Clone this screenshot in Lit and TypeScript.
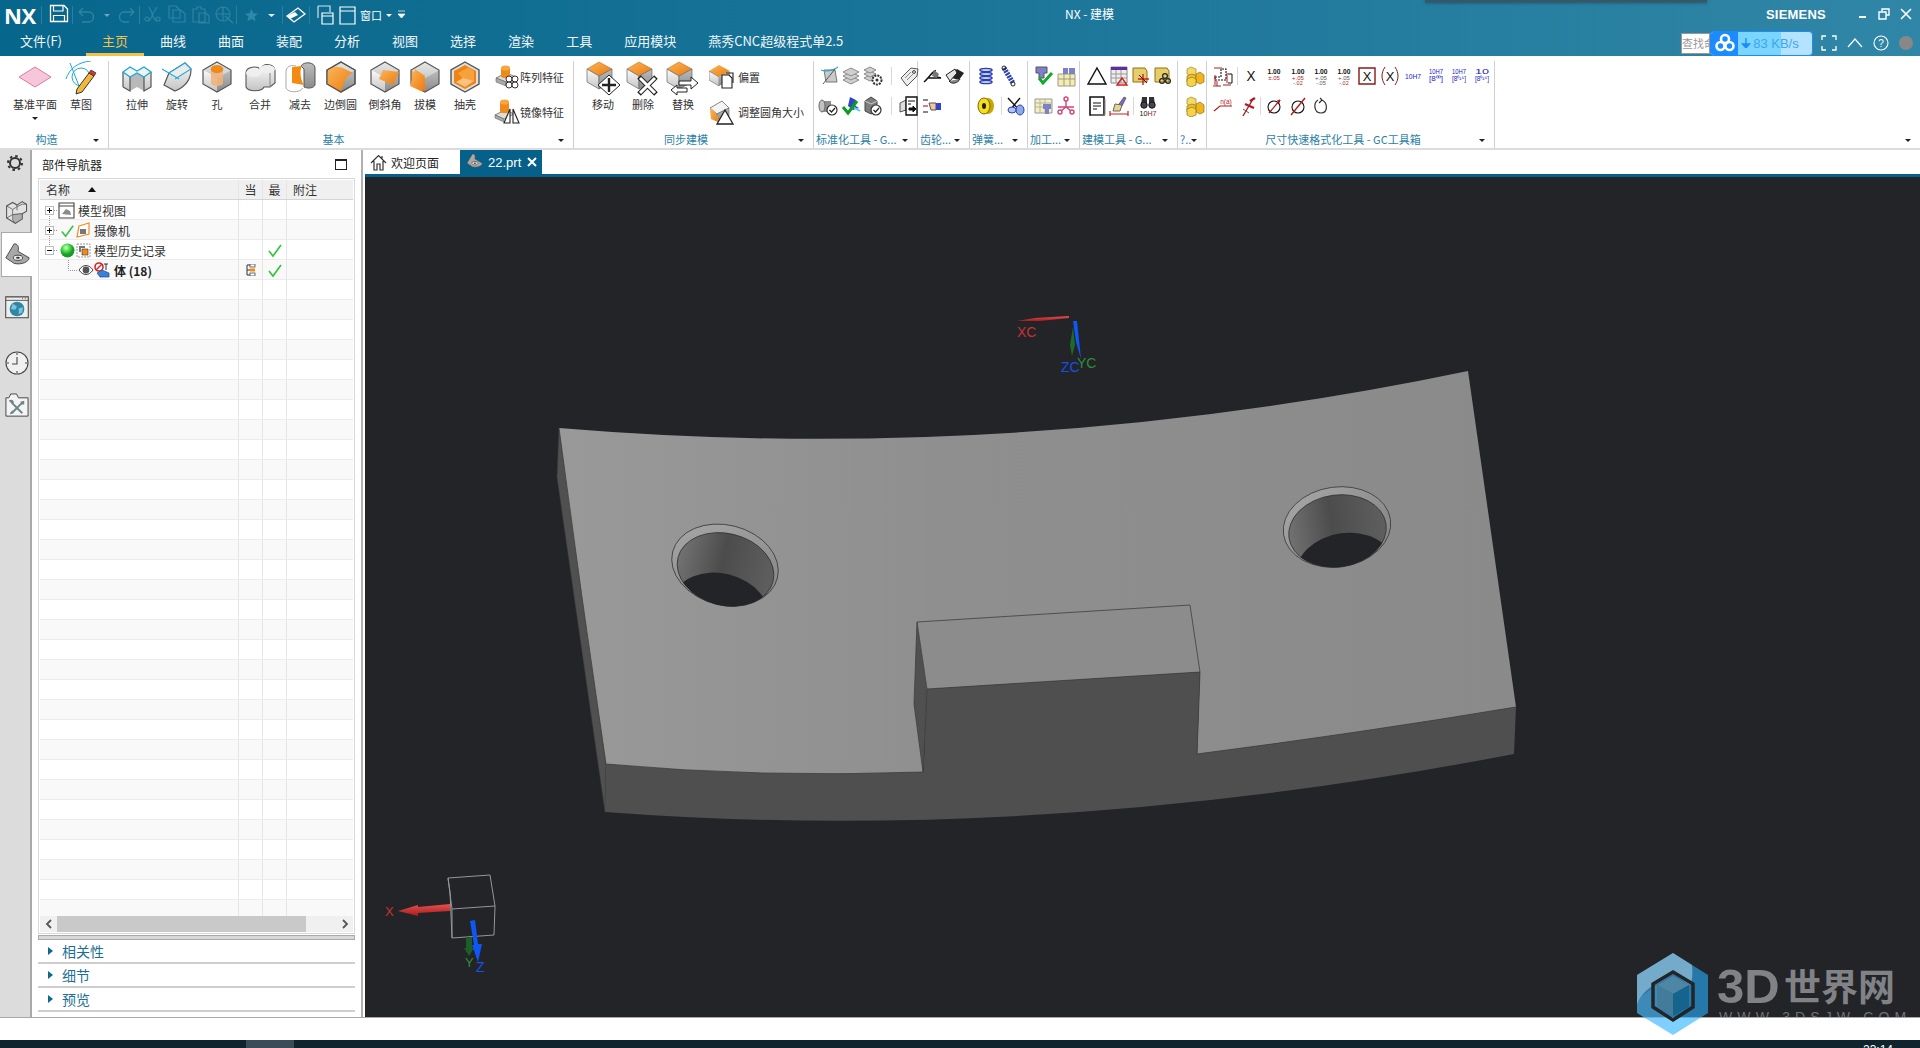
import { LitElement, css, html, svg, TemplateResult } from "lit";
import { customElement } from "lit/decorators.js";

const box = (size: number, c: unknown, w = size, h = w) =>
  html`<svg width=${size} height=${(size * h) / w} viewBox="0 0 ${w} ${h}">${c}</svg>`;

// base cube used by most of the ribbon icons
const cube = (t = "url(#gt)", l = "url(#gl)", r = "url(#gr)") => svg`
  <path d="M16 1 30 9 16 17 2 9Z" fill=${t} />
  <path d="M2 9 16 17V31L2 23Z" fill=${l} />
  <path d="M30 9 16 17V31L30 23Z" fill=${r} />
  <path d="M16 1 30 9V23L16 31 2 23V9Z" fill="none" stroke="#555" stroke-width="1.2" />`;

const orangeCube = svg`
  <path d="M13 1 26 8 13 15 1 8Z" fill="url(#go)" stroke="#c96a10" stroke-width=".6" />
  <path d="M1 8 13 15V28L1 21Z" fill="url(#gl)" stroke="#666" stroke-width=".7" />
  <path d="M26 8 13 15V28L26 21Z" fill="url(#gr)" stroke="#666" stroke-width=".7" />`;

const big: Record<string, unknown> = {
  plane: svg`<path d="M0 16 16 6 32 16 16 26Z" fill="#f6c6da" stroke="#e0789c" stroke-width="1" />`,
  sketch: svg`
    <path d="M1 18C4 8 13 1 26 0M5 2 16 30" fill="none" stroke="#1fa8d8" stroke-width="1" />
    <circle cx="16" cy="16" r="9" fill="none" stroke="#1fa8d8" stroke-width="1" />
    <path d="M12 28 24 12 29 15 17 31 11 33Z" fill="#f5b93a" stroke="#333" stroke-width="1" />
    <path d="M24 12 26 9 31 12 29 15Z" fill="#d33" stroke="#333" stroke-width=".8" />`,
  extrude: svg`
    <path d="M2 11 9 6 16 10 23 6 30 11V26L23 30V16L16 12 9 16V30L2 26Z" fill="url(#gl)" />
    <path d="M9 16 16 12 23 16V30L16 26 9 30Z" fill="#b9b9b9" />
    <path d="M2 26V11M30 11V26L23 30V16M9 16V30L2 26" fill="none" stroke="#555" stroke-width="1.2" />
    <path d="M2 11 9 6 16 10 23 6 30 11 23 16 16 12 9 16Z" fill="#f2f2f2" stroke="#1fa8d8" stroke-width="1.4" />`,
  revolve: svg`
    <path d="M8 12 24 2 30 8C30 20 24 26 14 30L3 24Z" fill="url(#gl)" stroke="#555" stroke-width="1.2" />
    <path d="M8 12 24 2 30 8 14 18Z" fill="#ececec" />
    <path d="M1 8 18 18M8 12 24 2 30 8 14 18" fill="none" stroke="#1fa8d8" stroke-width="1.1" />`,
  hole: svg`${cube()}
    <path d="M10 8V22C10 26 22 26 22 22V8Z" fill="#f0b27c" opacity=".9" />
    <ellipse cx="16" cy="8" rx="6" ry="3.6" fill="#f28a14" stroke="#d07010" stroke-width=".5" />`,
  unite: svg`
    <path d="M2 12C2 5 14 5 16 8 20 1 31 3 31 10V22L26 26H20C18 31 4 31 2 26Z" fill="url(#gl)" stroke="#555" stroke-width="1.1" />
    <ellipse cx="10" cy="12" rx="8" ry="4" fill="#efefef" />
    <ellipse cx="23" cy="8" rx="8" ry="4" fill="#efefef" />
    <path d="M26 12V26" stroke="#888" stroke-width="1" />`,
  subtract: svg`
    <path d="M17 5C20 0 31 1 31 7V24C30 27 24 28 20 26V8Z" fill="url(#gr)" stroke="#555" stroke-width="1" />
    <path d="M8 6 18 5C15 10 17 20 20 24L8 22Z" fill="#f28a14" />
    <path d="M2 10C3 4 9 4 12 5M2 10V27C4 32 16 32 19 27" fill="none" stroke="#aaa" stroke-width="1" />`,
  blend: svg`${cube("url(#gt)", "url(#go)", "url(#gr)")}
    <path d="M2 12C5 5 12 4 20 8L28 12C22 14 19 20 16 31L2 23Z" fill="url(#go)" />
    <path d="M16 1 30 9V23L16 31 2 23V9Z" fill="none" stroke="#555" stroke-width="1.2" />`,
  chamfer: svg`${cube()}
    <path d="M14 9 30 11 24 24 10 18Z" fill="url(#go)" />`,
  draft: svg`${cube("url(#gt)", "url(#go)", "url(#gr)")}
    <path d="M6 8 16 15 14 31 1 25Z" fill="url(#go)" />`,
  shell: svg`
    <path d="M16 1 30 9V23L16 31 2 23V9Z" fill="#dedede" stroke="#555" stroke-width="1.4" />
    <path d="M16 4 27 10V22L16 28 5 22V10Z" fill="#ef8412" />
    <path d="M9 12 20 6 25 10V20L14 18Z" fill="#f7a13c" />
    <path d="M7 21 14 17 25 20 16 26Z" fill="#f9c27e" />`,
  move: svg`<g transform="translate(1 0)">${orangeCube}</g>
    <path d="M24 14 35 24 24 34 13 24Z" fill="#fff" stroke="#222" stroke-width="1" />
    <path d="M24 17V31M17 24H31" stroke="#222" stroke-width="2.4" />`,
  del: svg`<g transform="translate(1 0)">${orangeCube}</g>
    <path d="M14 16 31 33M31 16 14 33" stroke="#222" stroke-width="5" />
    <path d="M15 17 30 32M30 17 15 32" stroke="#fff" stroke-width="3" />`,
  replace: svg`<g transform="translate(1 0)">${orangeCube}</g>
    <path d="M14 20H26V16L33 22 26 28V24H14Z" fill="#fff" stroke="#222" stroke-width="1" />
    <path d="M22 27H12V24L6 29 12 34V31H22Z" fill="#fff" stroke="#222" stroke-width="1" />`,
};

const wideArt = new Set(["move", "del", "replace"]);

const side: Record<string, unknown> = {
  pattern: svg`
    <path d="M2 14 12 9 22 13 12 18Z" fill="#ddd" stroke="#666" stroke-width=".8" />
    <path d="M2 14V18L12 22V18ZM22 13V17L12 22V18Z" fill="#aaa" stroke="#666" stroke-width=".6" />
    <path d="M7 4V12C7 15 16 15 16 12V4Z" fill="#ee8a1a" />
    <ellipse cx="11.5" cy="4" rx="4.5" ry="2.6" fill="#f6a540" />
    <g fill="#fff" stroke="#333" stroke-width="1"><circle cx="15" cy="15" r="3" /><circle cx="21" cy="15" r="3" /><circle cx="15" cy="21" r="3" /><circle cx="21" cy="21" r="3" /></g>`,
  mirror: svg`
    <path d="M1 16 11 11 20 15 10 20Z" fill="#ddd" stroke="#666" stroke-width=".8" />
    <path d="M1 16V19L10 23V20Z" fill="#aaa" stroke="#666" stroke-width=".6" />
    <path d="M6 3V12C6 15 15 15 15 12V3Z" fill="#ee8a1a" />
    <ellipse cx="10.5" cy="3" rx="4.5" ry="2.6" fill="#f6a540" />
    <path d="M16 10 10 24H16ZM19 10 25 24H19Z" fill="#fff" stroke="#222" stroke-width="1.1" />`,
  offset: svg`
    <path d="M10 1 21 7 10 13 0 7Z" fill="url(#go)" />
    <path d="M0 7 10 13V22L0 16Z" fill="url(#gl)" stroke="#666" stroke-width=".6" />
    <path d="M21 7 10 13V22L21 16Z" fill="url(#gr)" />
    <path d="M13 11H20L23 14V24H13Z" fill="#fff" stroke="#222" stroke-width="1.1" />
    <path d="M17 9H24V19" fill="none" stroke="#222" stroke-width="1.1" />`,
  resize: svg`
    <path d="M1 9 13 2 20 9 8 15Z" fill="#f4f4f4" stroke="#666" stroke-width=".8" />
    <path d="M1 9C1 12 2 18 2 20L11 24C9 20 8 17 8 15Z" fill="url(#go)" />
    <path d="M20 9V17L11 24 8 15Z" fill="url(#gr)" stroke="#666" stroke-width=".6" />
    <path d="M16 11 24 25H8Z" fill="#fff" stroke="#222" stroke-width="1.3" />`,
};

const blockG = svg`
  <path d="M8 2 13 4V9L8 11 4 9V4Z" fill="#f2d96a" stroke="#a08a20" stroke-width=".7" />
  <path d="M4 11 9 9 13 11V17L8 19 4 17Z" fill="#f5c22e" stroke="#8a7410" stroke-width=".7" />
  <path d="M13 9 17 7 21 10V17L17 19 13 17Z" fill="#f1b41e" stroke="#8a7410" stroke-width=".7" />
  <path d="M4 14 9 12 13 14V20L8 22 4 20Z" fill="#f6d24a" stroke="#8a7410" stroke-width=".7" />`;

const num = (a: string, b: string, c: string) => svg`
  <text x="11" y="9" text-anchor="middle" font-size="7.5" font-family="Liberation Sans" fill="#111" font-weight="700" textLength="13" lengthAdjust="spacingAndGlyphs">${a}</text>
  <text x="11" y="15" text-anchor="middle" font-size="6" font-family="Liberation Sans" fill=${c}>${b}</text>`;

const h7 = (top: string, bot: string) => svg`
  <text x="11" y="9" text-anchor="middle" font-size="7.5" font-family="Liberation Sans" fill="#1a20c8" textLength="14" lengthAdjust="spacingAndGlyphs">${top}</text>
  <text x="11" y="16" text-anchor="middle" font-size="6.5" font-family="Liberation Sans" fill="#1a20c8" textLength="14" lengthAdjust="spacingAndGlyphs">${bot}</text>`;

const mini: Record<string, unknown> = {
  trim: svg`<path d="M6 5H17L19 17H8Z" fill="#c9c9c9" stroke="#777" /><path d="M3 5C9 7 14 6 20 2" fill="none" stroke="#2ba6d6" stroke-width="1.2" /><path d="M5 19 17 4" stroke="#555" />`,
  layers: svg`<g fill="#d0d0d0" stroke="#8a8a8a"><path d="M3 15 11 11 19 15 11 19Z" /><path d="M3 11 11 7 19 11 11 15Z" /><path d="M3 7 11 3 19 7 11 11Z" /></g>`,
  layersGear: svg`<g fill="#d0d0d0" stroke="#8a8a8a"><path d="M2 13 8 10 14 13 8 16Z" /><path d="M2 9 8 6 14 9 8 12Z" /><path d="M2 5 8 2 14 5 8 8Z" /></g><circle cx="15" cy="15" r="4.5" fill="#fff" stroke="#333" stroke-width="2" stroke-dasharray="2 1" /><circle cx="15" cy="15" r="1.5" fill="#333" />`,
  tag: svg`<path d="M3 13 13 3 20 4 19 11 9 21Z" fill="#eee" stroke="#555" /><circle cx="16" cy="7" r="1.4" fill="#fff" stroke="#333" /><path d="M7 13 13 7M9 15 15 9" stroke="#888" />`,
  cylOk: svg`<path d="M3 6H13V17H3Z" fill="#8f8f8f" /><ellipse cx="4" cy="11" rx="3" ry="6" fill="#c2c2c2" stroke="#666" /><circle cx="14" cy="15" r="5" fill="#fff" stroke="#333" stroke-width="1.2" /><path d="M11.5 15 13.5 17 17 13" fill="none" stroke="#222" stroke-width="1.2" />`,
  blueOk: svg`<path d="M10 2 16 5 14 10 19 13 13 15 8 11Z" fill="#3344cc" /><path d="M13 12 20 16" stroke="#49d6e6" stroke-width="2" /><path d="M3 12 8 18 17 6" fill="none" stroke="#0a9c22" stroke-width="3" />`,
  boxOk: svg`<path d="M3 6 9 2 15 6V16L9 19 3 16Z" fill="#7d7d7d" stroke="#444" /><path d="M3 6 9 9 15 6" fill="none" stroke="#ccc" /><circle cx="14" cy="15" r="5" fill="#fff" stroke="#333" stroke-width="1.2" /><path d="M11.5 15 13.5 17 17 13" fill="none" stroke="#222" stroke-width="1.2" />`,
  exp: svg`<path d="M2 8 8 5V15L2 17Z" fill="#ddd" stroke="#555" /><path d="M8 2H19V20H8Z" fill="#fff" stroke="#111" stroke-width="1.4" /><path d="M10 6H17M10 9H13M11 13H15V11L18 14 15 17V15H11Z" stroke="#111" fill="#111" />`,
  pen: svg`<path d="M2 17C6 14 9 8 13 6 12 10 14 12 19 13H6" fill="none" stroke="#111" stroke-width="1.4" /><path d="M12 5 17 9 15 13 10 11Z" fill="#777" />`,
  gray2: svg`<path d="M4 12 13 4 20 8 15 15Z" fill="#222" /><path d="M2 10 11 4 13 8 6 16Z" fill="#e4e4e4" stroke="#222" /><path d="M5 16C8 20 14 18 16 14" fill="#888" stroke="#222" />`,
  hand: svg`<path d="M1 5H6M1 17H6" stroke="#111" stroke-width="1.2" /><path d="M1 11H6" stroke="#c22" stroke-width="1.2" /><path d="M7 8H14V15H9Z" fill="#f2c79c" stroke="#555" /><path d="M14 8H19V15H14Z" fill="#3344cc" />`,
  coil: svg`<g fill="none" stroke="#2a3fb5" stroke-width="1.6"><ellipse cx="11" cy="5" rx="6" ry="1.5" /><ellipse cx="11" cy="9" rx="6" ry="1.5" /><ellipse cx="11" cy="13" rx="6" ry="1.5" /><ellipse cx="11" cy="17" rx="6" ry="1.5" /></g>`,
  spring: svg`<path d="M7 3 16 18" stroke="#2a3fb5" stroke-width="5" stroke-dasharray="2 1" /><circle cx="7" cy="3" r="2" fill="none" stroke="#222" /><circle cx="16" cy="19" r="2" fill="none" stroke="#222" />`,
  washer: svg`<ellipse cx="13" cy="11" rx="6" ry="8" fill="#c5a800" /><ellipse cx="9" cy="11" rx="6" ry="8" fill="#f5dd20" stroke="#7a6a00" /><ellipse cx="9" cy="11" rx="2" ry="3" fill="#222" />`,
  blueSc: svg`<path d="M3 3 15 16M15 3 6 14" stroke="#111" stroke-width="1.4" /><ellipse cx="15" cy="15" rx="4" ry="5" fill="#8fa8e8" stroke="#2a3fb5" /><ellipse cx="7" cy="15" rx="4" ry="3" fill="#b5c4ee" stroke="#2a3fb5" />`,
  vcheck: svg`<path d="M3 2H14V8H11V13H6V8H3Z" fill="#7b82c8" stroke="#555" /><path d="M6 13 10 18 19 8" fill="none" stroke="#12a82a" stroke-width="3" />`,
  bars: svg`<path d="M3 9H20V21H3Z" fill="#f4eea8" stroke="#999" /><path d="M8 3H13V9H8ZM14 3H20V9H14Z" fill="#7b82c8" /><path d="M3 14H20M9 9V21M15 9V21" stroke="#999" />`,
  grid: svg`<path d="M2 4H19V18H2Z" fill="#f5efc0" stroke="#999" /><path d="M2 8H19M2 12H19M7 4V18M12 4V18" stroke="#b5b5a0" /><path d="M10 9H18V14H16V19H12V14H10Z" fill="#7b82c8" />`,
  star3: svg`<g fill="none" stroke="#d0447a" stroke-width="1.4"><circle cx="11" cy="4" r="2" /><circle cx="5" cy="17" r="2" /><circle cx="17" cy="17" r="2" /><path d="M11 6V12L6 16M11 12 16 16M3 12H19" /></g>`,
  tri: svg`<path d="M11 3 20 19H2Z" fill="none" stroke="#111" stroke-width="1.4" />`,
  table: svg`<path d="M3 2H19V18H3Z" fill="#eee" stroke="#888" /><path d="M3 2H19V5H3Z" fill="#5b2fa0" /><path d="M3 9H19M3 13H19M8 5V18M13 5V18" stroke="#999" /><path d="M14 13 19 20H9Z" fill="none" stroke="#c22" stroke-width="1.4" />`,
  folderA: svg`<path d="M3 3H15L17 6V17H3Z" fill="#e9cd6c" stroke="#8a7410" /><path d="M13 9V20M8 14H19" stroke="#c22" stroke-width="1.4" /><path d="M9 10 17 18" stroke="#222" />`,
  folderB: svg`<path d="M3 3H15L17 6V17H3Z" fill="#e9cd6c" stroke="#8a7410" /><g fill="none" stroke="#222" stroke-width="1.2"><circle cx="13" cy="11" r="2.4" /><circle cx="10" cy="16" r="2.4" /><circle cx="16" cy="16" r="2.4" /></g>`,
  doc: svg`<path d="M4 2H18V20H4Z" fill="#fff" stroke="#111" stroke-width="1.6" /><path d="M7 8H15M7 11H15M7 14H11" stroke="#111" stroke-width="1.2" /><path d="M5 20H19V4" fill="none" stroke="#888" />`,
  brush: svg`<path d="M11 9 16 2 18 3 14 11Z" fill="#7c6cc8" stroke="#333" stroke-width=".6" /><path d="M7 9 14 10 12 16H5Z" fill="#e8d48a" stroke="#666" /><path d="M2 19H20M2 16V21M20 16V21" stroke="#c22" stroke-width="1.2" />`,
  binoc: svg`<path d="M5 2H10V11H4ZM12 2H17L18 11H12Z" fill="#333" /><circle cx="7" cy="10" r="3.2" fill="#445" stroke="#111" /><circle cx="15" cy="10" r="3.2" fill="#445" stroke="#111" /><text x="11" y="20.5" text-anchor="middle" font-size="7.5" font-family="Liberation Sans" textLength="17" lengthAdjust="spacingAndGlyphs"><tspan fill="#111">10</tspan><tspan fill="#a01818">H7</tspan></text>`,
  cubes: blockG,
  dim: svg`<path d="M3 12H9V4H14V15H3Z" fill="none" stroke="#111" stroke-width="1.1" stroke-dasharray="2 1" /><path d="M2 3H10M11 20H19M15 8V18M5 16V21M1 21H9M3 10V20" stroke="#b01c1c" stroke-width="1" /><path d="M16 9H20V18H16" fill="none" stroke="#111" />`,
  x: svg`<text x="11" y="16" text-anchor="middle" font-size="14" font-family="Liberation Sans" fill="#111" textLength="9" lengthAdjust="spacingAndGlyphs">X</text>`,
  t1: num("1.00", "±.05", "#b01c1c"),
  t2: svg`${num("1.00", "+.05", "#b01c1c")}<text x="11" y="20" text-anchor="middle" font-size="5.5" font-family="Liberation Sans" fill="#b01c1c">-.02</text>`,
  t3: svg`${num("1.00", "+.05", "#555")}<text x="11" y="20" text-anchor="middle" font-size="5.5" font-family="Liberation Sans" fill="#555">-.05</text>`,
  t4: svg`${num("1.00", "+.05", "#555")}<text x="11" y="20" text-anchor="middle" font-size="5.5" font-family="Liberation Sans" fill="#b01c1c">-.02</text>`,
  boxX: svg`<path d="M3 3H19V19H3Z" fill="#fff" stroke="#8a1818" stroke-width="1.4" /><text x="11" y="16" text-anchor="middle" font-size="13" font-family="Liberation Sans" fill="#111">X</text>`,
  parX: svg`<path d="M6 2C2 8 2 14 6 20M16 2C20 8 20 14 16 20" fill="none" stroke="#8a1818" /><text x="11" y="16" text-anchor="middle" font-size="13" font-family="Liberation Sans" fill="#111">X</text>`,
  h7: svg`<text x="11" y="14" text-anchor="middle" font-size="8" font-family="Liberation Sans" fill="#1a20c8" textLength="16" lengthAdjust="spacingAndGlyphs">10H7</text>`,
  h7a: h7("10H7", "[8⁰⁰]"),
  h7b: h7("10H7", "[8⁰¹⁵]"),
  h7c: h7("10", "[8⁰¹⁵]"),
  leader: svg`<path d="M2 16 8 11H20" fill="none" stroke="#b01c1c" stroke-width="1.2" /><text x="14" y="9" text-anchor="middle" font-size="6.5" font-family="Liberation Sans" fill="#b01c1c">n(a)</text>`,
  flag: svg`<path d="M7 21 17 4" stroke="#b01c1c" stroke-width="1.4" /><path d="M9 9 18 13M14 6 19 3" stroke="#b01c1c" stroke-width="2.4" /><path d="M7 14 13 18" stroke="#555" />`,
  dia1: svg`<circle cx="11" cy="12" r="6" fill="none" stroke="#111" stroke-width="1.1" /><path d="M6 18 17 5" stroke="#b01c1c" stroke-width="1.2" /><path d="M17 5 14 6M17 5 16 8" stroke="#b01c1c" />`,
  dia2: svg`<circle cx="11" cy="12" r="6" fill="none" stroke="#111" stroke-width="1.1" /><path d="M4 20 18 3" stroke="#b01c1c" stroke-width="1.4" />`,
  rot: svg`<path d="M8 5C3 8 4 18 11 18 18 18 18 8 12 5L10 3M12 5 9 8" fill="none" stroke="#333" stroke-width="1.2" />`,
};

type Cell = { i?: string; w?: number; sep?: boolean };
type Group = {
  title: string;
  width: number;
  pad?: number;
  big?: { icon: string; label: string; w: number; drop?: boolean }[];
  side?: { icon: string; label: string }[];
  sideMargin?: number;
  sideGap?: number;
  rows?: Cell[][];
  flush?: boolean;
};

const c = (...names: string[]): Cell[] => names.map((i) => ({ i }));
const sep = (w: number): Cell => ({ sep: true, w });

const groups: Group[] = [
  {
    title: "构造",
    width: 109,
    pad: 9,
    big: [
      { icon: "plane", label: "基准平面", w: 52, drop: true },
      { icon: "sketch", label: "草图", w: 40 },
    ],
  },
  {
    title: "基本",
    width: 465,
    pad: 8,
    big: [
      { icon: "extrude", label: "拉伸", w: 40 },
      { icon: "revolve", label: "旋转", w: 40 },
      { icon: "hole", label: "孔", w: 40 },
      { icon: "unite", label: "合并", w: 46 },
      { icon: "subtract", label: "减去", w: 34 },
      { icon: "blend", label: "边倒圆", w: 47 },
      { icon: "chamfer", label: "倒斜角", w: 42 },
      { icon: "draft", label: "拔模", w: 38 },
      { icon: "shell", label: "抽壳", w: 42 },
    ],
    side: [
      { icon: "pattern", label: "阵列特征" },
      { icon: "mirror", label: "镜像特征" },
    ],
    sideMargin: 8,
    sideGap: 0,
  },
  {
    title: "同步建模",
    width: 240,
    pad: 9,
    big: [
      { icon: "move", label: "移动", w: 40 },
      { icon: "del", label: "删除", w: 40 },
      { icon: "replace", label: "替换", w: 40 },
    ],
    side: [
      { icon: "offset", label: "偏置" },
      { icon: "resize", label: "调整圆角大小" },
    ],
    sideMargin: 6,
    sideGap: 3,
  },
  {
    title: "标准化工具 - G...",
    width: 104,
    pad: 4,
    flush: true,
    rows: [
      [...c("trim", "layers", "layersGear"), sep(14), ...c("tag")],
      [...c("cylOk", "blueOk", "boxOk"), sep(14), ...c("exp")],
    ],
  },
  {
    title: "齿轮...",
    width: 52,
    pad: 4,
    flush: true,
    rows: [c("pen", "gray2"), c("hand")],
  },
  {
    title: "弹簧...",
    width: 58,
    pad: 5,
    flush: true,
    rows: [c("coil", "spring"), [...c("washer"), sep(8), ...c("blueSc")]],
  },
  {
    title: "加工...",
    width: 52,
    pad: 5,
    flush: true,
    rows: [c("vcheck", "bars"), c("grid", "star3")],
  },
  {
    title: "建模工具 - G...",
    width: 98,
    pad: 6,
    flush: true,
    rows: [c("tri", "table", "folderA", "folderB"), [...c("doc", "brush"), sep(7), ...c("binoc")]],
  },
  { title: "?..", width: 29, pad: 5, flush: true, rows: [c("cubes"), c("cubes")] },
  {
    title: "尺寸快速格式化工具 - GC工具箱",
    width: 288,
    pad: 5,
    rows: [
      [
        { i: "dim" },
        sep(6),
        { i: "x" },
        { i: "t1", w: 24 },
        ...["t2", "t3", "t4", "boxX", "parX", "h7", "h7a", "h7b", "h7c"].map((i) => ({ i, w: 23 })),
      ],
      [
        { i: "leader" },
        { i: "flag", w: 25 },
        sep(3),
        { i: "dia1", w: 24 },
        { i: "dia2", w: 23 },
        { i: "rot", w: 23 },
      ],
    ],
  },
];

const menus = ["曲线", "曲面", "装配", "分析", "视图", "选择", "渲染", "工具", "应用模块", "燕秀CNC超级程式单2.5"];

const check = (s = 16) =>
  box(s, svg`<path d="M2 9 6 14 14 3" fill="none" stroke="#37c53f" stroke-width="1.7" />`, 16, 16);

const railIcons = {
  gear: svg`<circle cx="13" cy="13" r="5" fill="none" stroke="#333" stroke-width="2" /><circle cx="13" cy="13" r="7" fill="none" stroke="#333" stroke-width="2" stroke-dasharray="2.5 3" />`,
  part: svg`<path d="M3 8 10 4 15 7 21 3 26 6V14L21 17V23L13 28 3 22Z" fill="#e2e2e2" stroke="#555" stroke-width="1.2" /><path d="M3 8 10 12 15 9M10 12V18L3 22M10 18 21 17M15 7V13M15 9 21 6 26 6" fill="none" stroke="#666" /><path d="M10 18 21 17V23L13 28 10 24Z" fill="#b0b0b0" stroke="#555" stroke-width=".8" />`,
  model: svg`<path d="M3 18 12 3C17 3 17 8 16 11L28 18C28 22 20 26 12 24Z" fill="#a8a8a8" stroke="#444" /><ellipse cx="16" cy="18" rx="5" ry="2.8" fill="#e8e8e8" stroke="#444" /><ellipse cx="16" cy="18" rx="2" ry="1" fill="#333" />`,
  web: svg`<path d="M2 1H28V25H2Z" fill="#eee" stroke="#444" stroke-width="1.2" /><path d="M2 5H28" stroke="#444" /><path d="M21 3H22M24 3H25" stroke="#444" /><circle cx="15" cy="15" r="8.5" fill="#2f87a8" /><path d="M10 9 15 12 13 16 8 15ZM17 14 22 13 21 19 17 21Z" fill="#7cc4d8" />`,
  clock: svg`<circle cx="13" cy="13" r="11" fill="#f0f0f0" stroke="#444" stroke-width="1.1" /><path d="M13 3V5M13 21V23M3 13H5M21 13H23M13 7V14H8" fill="none" stroke="#444" stroke-width="1.1" />`,
  tools: svg`<path d="M2 5H5L7 1H13L15 5H25V24H2Z" fill="#f4f4f4" stroke="#444" /><path d="M8 10 19 21" stroke="#6b8785" stroke-width="2" /><path d="M5 8C7 6 11 7 10 11L7 10Z" fill="#6b8785" /><path d="M19 10 9 20" stroke="#6b8785" stroke-width="2" /><path d="M17 9 21 8 21 12 18 12ZM6 21 9 18 10 21 7 22Z" fill="#6b8785" />`,
};

const rowCount = 36;

@customElement("app-root")
export class AppRoot extends LitElement {
  static styles = css`
    :host {
      display: block;
      position: relative;
      width: 1920px;
      height: 1048px;
      overflow: hidden;
      background: #fff;
      font-family: "Noto Sans CJK SC", "Liberation Sans", sans-serif;
      font-size: 11px;
      color: #333;
    }

    svg {
      display: block;
      flex: none;
    }

    .chrome {
      height: 56px;
      background: linear-gradient(90deg, #07668c 0%, #1a7599 50%, #3086a6 100%);
      color: #fff;
    }

    .titlebar {
      display: flex;
      align-items: center;
      height: 30px;
      position: relative;
    }

    .shadow {
      position: absolute;
      left: 1425px;
      top: 0;
      width: 282px;
      height: 2px;
      background: #3a5566;
      box-shadow: 0 1px 3px rgba(20, 40, 50, 0.6);
    }

    .logo {
      width: 41px;
      padding-left: 4px;
      box-sizing: border-box;
      font: 700 22px/30px "Open Sans", "Liberation Sans", sans-serif;
      letter-spacing: -0.4px;
    }

    .qat {
      display: flex;
      align-items: center;
      height: 22px;
    }

    .qat .bar {
      width: 1px;
      height: 18px;
      background: #2d7f9f;
    }

    .winlabel {
      font-size: 11px;
      margin-left: 4px;
    }

    .winlabel + .drop {
      margin: 0 4px;
    }

    .wintitle {
      margin-left: 657px;
      font-size: 12px;
      padding-bottom: 3px;
      white-space: nowrap;
    }

    .drop {
      width: 0;
      height: 0;
      border-left: 3px solid transparent;
      border-right: 3px solid transparent;
      border-top: 3px solid currentColor;
    }

    .brand {
      font: 700 13px "Liberation Sans", sans-serif;
      letter-spacing: 0.2px;
      margin-left: auto;
      width: 92px;
      padding-bottom: 2px;
    }

    .winbtns {
      display: flex;
      align-items: center;
      gap: 10px;
      width: 62px;
      padding-bottom: 2px;
    }

    .menubar {
      display: flex;
      height: 26px;
      font-size: 13px;
      line-height: 22px;
    }

    .menu {
      padding: 0 16px;
      height: 23px;
      color: #f2f7f9;
    }

    .menu.file {
      width: 86px;
      box-sizing: border-box;
      padding: 0 0 0 20px;
    }

    .menu.on {
      color: #f6c146;
      border-bottom: 3px solid #f6c146;
    }

    .tray {
      margin-left: auto;
      display: flex;
      align-items: center;
      height: 26px;
      padding-right: 7px;
    }

    .search {
      width: 29px;
      height: 21px;
      background: #fff;
      border: 1px solid #999;
      box-sizing: border-box;
      color: #999;
      font-size: 11px;
      line-height: 19px;
      overflow: hidden;
      white-space: nowrap;
    }

    .disk {
      display: flex;
      width: 103px;
      height: 25px;
      margin-right: 8px;
      border-radius: 4px;
      border: 1px solid #1a8cff;
      box-sizing: border-box;
      overflow: hidden;
      background: #b3e3ff;
      font: 13px/23px "Liberation Sans", sans-serif;
      color: #3ba5f5;
    }

    .disk .logoBox {
      width: 28px;
      background: #1a8cff;
      display: flex;
      align-items: center;
      justify-content: center;
    }

    .disk .speed {
      display: flex;
      align-items: center;
      gap: 2px;
      padding-left: 3px;
      width: 73px;
      background: linear-gradient(90deg, #7bd6ff 0 58%, transparent 58%);
      white-space: nowrap;
    }

    .tray-ic {
      display: flex;
      align-items: center;
      gap: 10px;
    }

    .ribbon {
      display: flex;
      height: 92px;
      border-bottom: 2px solid #dcdcdc;
      background: #fff;
    }

    .group {
      position: relative;
      display: flex;
      flex-direction: column;
      box-sizing: border-box;
      height: 87px;
      border-right: 1px solid #d0d0d0;
      margin-top: 5px;
    }

    .group.rest {
      flex: 1;
      border-right: 0;
    }

    .gbody {
      display: flex;
      flex: 1;
      min-height: 0;
    }

    .gfoot {
      height: 16px;
      line-height: 15px;
      text-align: center;
      color: #2b7fa6;
      font-size: 11px;
      white-space: nowrap;
      padding-right: 15px;
    }

    .gfoot.flush {
      text-align: left;
      padding-left: 2px;
      padding-right: 0;
    }

    .gfoot .drop {
      position: absolute;
      right: 9px;
      bottom: 6px;
      color: #222;
    }

    .bigbtn {
      display: flex;
      flex-direction: column;
      align-items: center;
      color: #333;
    }

    .bigbtn .art {
      height: 36px;
      margin-bottom: -1px;
    }

    .bigbtn .lbl {
      line-height: 17px;
      white-space: nowrap;
    }

    .bigbtn .drop {
      margin-top: 4px;
      color: #222;
    }

    .sides {
      display: flex;
      flex-direction: column;
      gap: 11px;
      padding-top: 4px;
    }

    .sidebtn {
      display: flex;
      align-items: center;
      height: 24px;
      white-space: nowrap;
    }

    .rows {
      display: flex;
      flex-direction: column;
    }

    .row {
      display: flex;
      align-items: center;
      height: 30px;
    }

    .cell {
      display: flex;
      justify-content: center;
      flex: none;
    }

    .vsep {
      display: flex;
      justify-content: center;
      height: 18px;
    }

    .vsep::after {
      content: "";
      width: 1px;
      background: #d8d8d8;
    }

    .main {
      display: flex;
      height: 867px;
    }

    .rail {
      width: 32px;
      box-sizing: border-box;
      background: #dcdcdc;
      border-right: 2px solid #a9a9a9;
      display: flex;
      flex-direction: column;
      align-items: center;
    }

    .r-gear {
      margin-right: 1px;
    }

    .r-part {
      margin: 23px 0 0 3px;
    }

    .r-on {
      width: 31px;
      height: 45px;
      margin: 7px 0 0 3px;
      background: #fff;
      border: 1px solid #aaa;
      border-right: 0;
      box-sizing: border-box;
      display: flex;
      align-items: center;
      justify-content: center;
      z-index: 1;
    }

    .r-web {
      margin: 19px 0 0 3px;
    }

    .r-clock {
      margin: 28px 0 0 3px;
    }

    .r-tools {
      margin: 17px 0 0 3px;
    }

    .nav {
      width: 331px;
      box-sizing: border-box;
      padding: 0 6px;
      display: flex;
      flex-direction: column;
      border-right: 2px solid #b0b0b0;
      font-size: 12px;
    }

    .navhead {
      height: 28px;
      flex: none;
      display: flex;
      align-items: center;
      justify-content: space-between;
      padding: 0 8px 0 4px;
      color: #222;
    }

    .maxbtn {
      width: 10px;
      height: 8px;
      border: 1px solid #222;
      border-top-width: 2px;
    }

    .table {
      border: 1px solid #d8d8d8;
      padding: 1px;
      display: flex;
      flex-direction: column;
      height: 756px;
      flex: none;
      box-sizing: border-box;
      overflow: hidden;
    }

    .tr {
      display: grid;
      grid-template-columns: 199px 24px 24px 1fr;
      height: 20px;
      flex: none;
      box-sizing: border-box;
      border-bottom: 1px solid #ececec;
      background: #fff;
    }

    .tr.alt {
      background: #f9f9f9;
    }

    .tr.head {
      background: #f0f0f0;
      border-bottom: 1px solid #d4d4d4;
      color: #333;
    }

    .td {
      border-right: 1px solid #e6e6e6;
      display: flex;
      align-items: center;
      justify-content: center;
      min-width: 0;
    }

    .td:last-child {
      border-right: 0;
      justify-content: flex-start;
      padding-left: 6px;
    }

    .td.name {
      justify-content: flex-start;
      white-space: nowrap;
    }

    .td.head-name {
      padding-left: 6px;
      gap: 18px;
    }

    .sort {
      width: 0;
      height: 0;
      border-left: 4.5px solid transparent;
      border-right: 4.5px solid transparent;
      border-bottom: 5px solid #111;
    }

    .rowtxt {
      margin-left: 3px;
      color: #333;
    }

    .rowtxt.bold {
      font-weight: 700;
      color: #222;
    }

    .gap2 {
      width: 2px;
      flex: none;
    }

    .gap1 {
      width: 1px;
      flex: none;
    }

    .rows-wrap {
      flex: 1;
      min-height: 0;
      overflow: hidden;
      display: flex;
      flex-direction: column;
    }

    .hscroll {
      height: 16px;
      flex: none;
      display: flex;
      align-items: center;
      background: #f0f0f0;
    }

    .hscroll .thumb {
      width: 249px;
      height: 16px;
      background: #c9c9c9;
    }

    .hscroll .fill {
      flex: 1;
    }

    .hscroll .end {
      width: 17px;
      display: flex;
      justify-content: center;
    }

    .splitter {
      flex: none;
      height: 5px;
      box-sizing: border-box;
      border: 1px solid #aaa;
      background: #d8d8d8;
      margin: 1px 0 0;
    }

    .section {
      display: flex;
      align-items: center;
      height: 24px;
      box-sizing: border-box;
      flex: none;
      border-bottom: 2px solid #cecece;
      color: #1c6f94;
      font-size: 14px;
      padding: 0 0 1px 10px;
      gap: 9px;
    }

    .section i {
      width: 0;
      height: 0;
      border-top: 4px solid transparent;
      border-bottom: 4px solid transparent;
      border-left: 5px solid #0b6a8e;
    }

    .work {
      flex: 1;
      padding-left: 2px;
      display: flex;
      flex-direction: column;
      min-width: 0;
    }

    .tabs {
      height: 27px;
      flex: none;
      box-sizing: border-box;
      display: flex;
      border-bottom: 3px solid #05608a;
      font-size: 12px;
    }

    .tab {
      display: flex;
      align-items: center;
      height: 24px;
      gap: 4px;
    }

    .tab.home {
      width: 95px;
      padding-left: 5px;
      box-sizing: border-box;
      color: #222;
    }

    .tab.on {
      width: 82px;
      padding-left: 6px;
      box-sizing: border-box;
      background: #05608a;
      color: #fff;
      font: 13px "Liberation Sans", sans-serif;
    }

    .tab.on .close {
      margin-left: 2px;
    }

    .view {
      flex: 1;
      min-height: 0;
      background: #232428;
    }

    .status {
      height: 23px;
      box-sizing: border-box;
      border-top: 1px solid #a8a8a8;
      background: #fff;
    }

    .taskbar {
      height: 8px;
      background: #10242e;
      display: flex;
      overflow: hidden;
      color: #fff;
      font: 12px/14px "Liberation Sans", sans-serif;
    }

    .taskbtn {
      width: 48px;
      margin-left: 246px;
      background: #3a4c57;
    }

    .clock {
      margin-left: auto;
      width: 57px;
      padding-top: 3px;
    }

    .mark {
      position: absolute;
      left: 1630px;
      top: 945px;
    }
  `;

  private group(g: Group) {
    return html`<div class="group" style="width:${g.width}px">
      <div class="gbody" style="padding-left:${g.pad ?? 0}px">
        ${g.big?.map(
          (b) => html`<div class="bigbtn" style="width:${b.w}px">
            <div class="art">
              ${box(36, wideArt.has(b.icon) ? big[b.icon] : svg`<g transform="translate(2 0)">${big[b.icon]}</g>`)}
            </div>
            <div class="lbl">${b.label}</div>
            ${b.drop ? html`<span class="drop"></span>` : null}
          </div>`
        )}
        ${g.side
          ? html`<div class="sides" style="margin-left:${g.sideMargin}px">
              ${g.side.map(
                (s) => html`<div class="sidebtn" style="gap:${g.sideGap}px">
                  ${box(26, side[s.icon])}<span>${s.label}</span>
                </div>`
              )}
            </div>`
          : null}
        ${g.rows
          ? html`<div class="rows">
              ${g.rows.map(
                (r) => html`<div class="row">
                  ${r.map((x) =>
                    x.sep
                      ? html`<div class="vsep" style="width:${x.w}px"></div>`
                      : html`<div class="cell" style="width:${x.w ?? 22}px">${box(22, mini[x.i!])}</div>`
                  )}
                </div>`
              )}
            </div>`
          : null}
      </div>
      <div class="gfoot ${g.flush ? "flush" : ""}">${g.title}<span class="drop"></span></div>
    </div>`;
  }

  private titlebar() {
    const dim = "#2f84a4";
    return html`<div class="titlebar">
      <div class="logo">NX</div>
      <div class="qat">
        ${box(
          32,
          svg`
          <rect x="0" y="2" width="1" height="18" fill="#2d7f9f" />
          <path d="M9.5 1.5H23L26.5 5V17.5H9.5Z" fill="none" stroke="#fff" stroke-width="1.3" />
          <path d="M12.5 2V7H22V2M12.5 17V11.5H23.5V17" fill="none" stroke="#fff" stroke-width="1.2" />
          <rect x="31" y="2" width="1" height="18" fill="#2d7f9f" />`,
          32,
          22
        )}
        ${box(
          66,
          svg`
          <g fill="none" stroke=${dim} stroke-width="1.4" transform="translate(0 2)">
            <path d="M6 6H16C22 6 22 16 16 16H9M6 6 10 2M6 6 10 10" />
            <path d="M61 6H51C45 6 45 16 51 16H56M61 6 57 2M61 6 57 10" />
          </g>
          <path d="M31 10H37L34 13Z" fill="#6fa6bc" />`,
          66,
          22
        )}
        <span class="bar"></span>
        ${box(
          96,
          svg`
          <g fill="none" stroke=${dim} stroke-width="1.2" transform="translate(1 1)">
            <path d="M8 2 12 10 8 16M16 2 11 10 15 16" /><circle cx="6" cy="14" r="2" /><circle cx="17" cy="14" r="2" />
            <path d="M28 1H35L39 5V13H28ZM32 5H40L44 9V17H32Z" />
            <path d="M52 4H56V2H60V4H64V17H52ZM58 8H65L68 11V18H58Z" />
            <circle cx="82" cy="9" r="7" /><path d="M75 9H89M82 2V16M84 11 92 18" />
          </g>`,
          96,
          22
        )}
        <span class="bar"></span>
        ${box(
          45,
          svg`
          <path d="M14.5 5 16.5 9.2 21 9.7 17.6 12.7 18.6 17.2 14.5 14.9 10.4 17.2 11.4 12.7 8 9.7 12.5 9.2Z" fill="#2f87aa" />
          <path d="M31 10H38L34.5 13Z" fill="#dfeef4" />`,
          45,
          22
        )}
        <span class="bar"></span>
        ${box(
          26,
          svg`
          <path d="M4 12 15 4 22 10 11 18Z" fill="none" stroke="#fff" stroke-width="1.3" />
          <path d="M4 12 12 8 15 11 7 15Z" fill="#fff" />`,
          26,
          22
        )}
        <span class="bar"></span>
        ${box(
          46,
          svg`
          <g fill="none" stroke="#fff" stroke-width="1.2">
            <path d="M8 2H20V8M8 2V14" stroke="#cfe2ea" />
            <path d="M12 9H23V20H12ZM12 12H23" />
            <path d="M30 3H45V20H30ZM30 7H45" />
          </g>`,
          46,
          22
        )}
      </div>
      <span class="winlabel">窗口</span>
      <span class="drop"></span>
      ${box(12, svg`<path d="M2 2H9M2 5H9L5.5 9Z" fill="#fff" stroke="#fff" stroke-width=".7" />`)}
      <div class="wintitle">NX - 建模</div>
      <span class="shadow"></span>
      <div class="brand">SIEMENS</div>
      <div class="winbtns">
        ${box(10, svg`<path d="M1 8H8" stroke="#fff" stroke-width="2" />`)}
        ${box(12, svg`<path d="M4 3V1H11V7H8M1 4H8V11H1Z" fill="none" stroke="#fff" stroke-width="1.4" />`)}
        ${box(12, svg`<path d="M1 1 11 11M11 1 1 11" stroke="#fff" stroke-width="1.6" />`)}
      </div>
    </div>`;
  }

  private menubar() {
    return html`<div class="menubar">
      <div class="menu file">文件(F)</div>
      <div class="menu on">主页</div>
      ${menus.map((m) => html`<div class="menu">${m}</div>`)}
      <div class="tray">
        <div class="search">查找命令</div>
        <div class="disk">
          <div class="logoBox">
            ${box(
              22,
              svg`<g fill="none" stroke="#fff" stroke-width="2.6"><circle cx="11" cy="7" r="4" /><circle cx="6.5" cy="14" r="4" /><circle cx="15.5" cy="14" r="4" /></g>`
            )}
          </div>
          <div class="speed">
            ${box(10, svg`<path d="M5 0V7M1.5 6 5 10 8.5 6Z" fill="#1a8cff" stroke="#1a8cff" stroke-width="1.4" />`)}83 KB/s
          </div>
        </div>
        <div class="tray-ic">
          ${box(16, svg`<path d="M1 5V1H5M11 1H15V5M15 11V15H11M5 15H1V11" fill="none" stroke="#fff" stroke-width="1.3" />`)}
          ${box(16, svg`<path d="M1 12 8 4 15 12" fill="none" stroke="#fff" stroke-width="1.2" />`)}
          ${box(
            16,
            svg`<circle cx="8" cy="8" r="7" fill="none" stroke="#fff" stroke-width="1.1" /><text x="8" y="12" text-anchor="middle" font-size="10" font-family="Liberation Sans" fill="#fff">?</text>`
          )}
          ${box(14, svg`<circle cx="7" cy="7" r="7" fill="#888" />`)}
        </div>
      </div>
    </div>`;
  }

  private tree() {
    const twist = (plus: boolean | null, up: boolean, down: boolean) =>
      box(
        18,
        svg`
        <g stroke="#999" stroke-dasharray="1 1">
          ${up ? svg`<path d="M9.5 0V6" />` : null}
          ${down ? svg`<path d="M9.5 14V20" />` : null}
          <path d="M14 10.5H20" />
        </g>
        <rect x="5.5" y="6.5" width="8" height="8" fill="#fff" stroke="#bbb" />
        <path d=${plus ? "M7 10.5H12M9.5 8V13" : "M7 10.5H12"} stroke="#111" />`,
        18,
        20
      );
    const rows: TemplateResult[] = [
      html`${twist(true, false, true)}${box(
          17,
          svg`<path d="M1 1H16V16H1Z" fill="#fff" stroke="#444" stroke-width="1.1" /><path d="M1 4H16" stroke="#444" /><path d="M4 12 8 7 12 9 13 13Z" fill="#8a8a8a" />`
        )}<span class="rowtxt">模型视图</span>`,
      html`${twist(true, true, true)}<span class="gap2"></span>${check(15)}${box(
          16,
          svg`<path d="M4 4 14 1V12L2 15Z" fill="#fff" stroke="#f08a20" stroke-width="1.2" /><path d="M5 7H11V12H5Z" fill="#777" />`
        )}<span class="rowtxt">摄像机</span>`,
      html`${twist(false, true, false)}<span class="gap2"></span>${box(
          15,
          svg`<defs><radialGradient id="ball" cx=".4" cy=".3"><stop offset="0" stop-color="#d8ffd0" /><stop offset=".5" stop-color="#4ee04e" /><stop offset="1" stop-color="#1a9a2a" /></radialGradient></defs><circle cx="7.5" cy="7.5" r="7" fill="url(#ball)" />`
        )}<span class="gap1"></span>${box(
          15,
          svg`<path d="M1 1H14V14H1Z" fill="#fff" stroke="#999" stroke-dasharray="2 1" /><path d="M3 3H9V5H5V9H3Z" fill="#777" /><path d="M6 6H12V12H6Z" fill="#f28a14" stroke="#333" stroke-width=".6" />`
        )}<span class="rowtxt">模型历史记录</span>`,
      html`${box(
          38,
          svg`<path d="M28.5 0V10.5H38" fill="none" stroke="#999" stroke-dasharray="1 1" />`,
          38,
          20
        )}${box(
          16,
          svg`<path d="M1 8C5 2 11 2 15 8 11 14 5 14 1 8Z" fill="#fff" stroke="#444" /><circle cx="8" cy="8" r="3.4" fill="#555" />`
        )}${box(
          17,
          svg`<circle cx="5" cy="5" r="4" fill="#fff" stroke="#d22" stroke-width="1.6" /><path d="M2 8 8 2" stroke="#d22" stroke-width="1.4" /><path d="M10 2H14M12 2V8" stroke="#333" /><path d="M3 11 8 8 15 11V15H6Z" fill="#3a7fd8" stroke="#1a4a9a" stroke-width=".7" />`
        )}<span class="rowtxt bold">体 (18)</span>`,
    ];
    const tags = box(
      12,
      svg`<path d="M2 1V11M2 1H8M2 6H5M2 11H5" fill="none" stroke="#333" /><rect x="5" y="0" width="5" height="3" fill="#fff" stroke="#333" stroke-width=".7" /><rect x="5" y="4.5" width="5" height="3" fill="#f28a14" /><rect x="5" y="9" width="5" height="3" fill="#fff" stroke="#333" stroke-width=".7" />`
    );
    return html`<div class="table">
      <div class="tr head">
        <div class="td name head-name">名称 <span class="sort"></span></div>
        <div class="td">当</div>
        <div class="td">最</div>
        <div class="td">附注</div>
      </div>
      <div class="rows-wrap">
        ${Array.from({ length: rowCount }, (_, i) => html`<div class="tr ${i % 2 ? "alt" : ""}">
          <div class="td name">${rows[i] ?? null}</div>
          <div class="td">${i === 3 ? tags : null}</div>
          <div class="td">${i === 2 || i === 3 ? check(16) : null}</div>
          <div class="td"></div>
        </div>`)}
      </div>
      <div class="hscroll">
        <div class="end">${box(10, svg`<path d="M7 1 3 5 7 9" fill="none" stroke="#555" stroke-width="1.8" />`)}</div>
        <div class="thumb"></div>
        <div class="fill"></div>
        <div class="end">${box(10, svg`<path d="M3 1 7 5 3 9" fill="none" stroke="#555" stroke-width="1.8" />`)}</div>
      </div>
    </div>`;
  }

  private part() {
    const holeL = { cx: 725, cy: 565, ix: 725.5, iy: 569.5, rot: 14, dx: -5, dy: 40 };
    const holeR = { cx: 1337, cy: 527, ix: 1337.5, iy: 531, rot: -8, dx: 8, dy: 38 };
    const hole = (h: typeof holeL, id: string) => svg`
      <g>
        <ellipse cx=${h.cx} cy=${h.cy} rx="54" ry="40" transform="rotate(${h.rot} ${h.cx} ${h.cy})" fill="url(#lip)" stroke="#3a3a3a" stroke-width=".8" />
        <clipPath id=${id}><ellipse cx=${h.ix} cy=${h.iy} rx="49" ry="36" transform="rotate(${h.rot} ${h.ix} ${h.iy})" /></clipPath>
        <ellipse cx=${h.ix} cy=${h.iy} rx="49" ry="36" transform="rotate(${h.rot} ${h.ix} ${h.iy})" fill="url(#bore)" stroke="#333" stroke-width=".8" />
        <g clip-path="url(#${id})">
          <ellipse cx=${h.ix + h.dx} cy=${h.iy + h.dy} rx="49" ry="36" transform="rotate(${h.rot} ${h.ix + h.dx} ${h.iy + h.dy})" fill="#232428" />
        </g>
      </g>`;
    return html`<svg class="view" width="1555" height="840" viewBox="365 177 1555 840">
      <defs>
        <linearGradient id="face" x1="0" x2="1" y1="0" y2="0">
          <stop offset="0" stop-color="#999999" />
          <stop offset=".4" stop-color="#8f8f8f" />
          <stop offset="1" stop-color="#8a8a8a" />
        </linearGradient>
        <linearGradient id="bore" x1="0" x2="1" y1="0" y2="0">
          <stop offset="0" stop-color="#727272" />
          <stop offset=".45" stop-color="#4c4c4c" />
          <stop offset="1" stop-color="#5f5f5f" />
        </linearGradient>
        <linearGradient id="lip" x1="0" x2="1" y1="0" y2="1">
          <stop offset="0" stop-color="#a8a8a8" />
          <stop offset="1" stop-color="#808080" />
        </linearGradient>
        <linearGradient id="redA" x1="0" x2="0" y1="0" y2="1">
          <stop offset="0" stop-color="#e65050" />
          <stop offset="1" stop-color="#a81c1c" />
        </linearGradient>
      </defs>
      <path d="M559 428 557 477 605 812 606 764Z" fill="#505050" stroke="#3a3a3a" stroke-width=".5" />
      <path d="M606 764Q760 778 923 772L1197 754Q1360 733 1516 707L1514 754Q1041 845 605 812Z" fill="#4f4f4f" />
      <path
        d="M559 428Q1013 466 1468 371L1516 707Q1360 733 1197 754L1200 672 927 689 923 772Q760 778 606 764Q581 595 559 428Z"
        fill="url(#face)"
      />
      <path d="M917 622 927 689 923 772 914 704Z" fill="#505050" />
      <path d="M917 622 1190 605 1200 672 927 689Z" fill="#8c8c8c" />
      <path d="M927 689 1200 672 1197 764 923 782Z" fill="#4f4f4f" />
      <g fill="none" stroke="#3f3f3f" stroke-width=".8">
        <path d="M917 622 1190 605 1200 672 927 689ZM927 689 923 772M1200 672 1197 754M917 622 914 704 923 772" />
        <path d="M559 428Q581 595 606 764Q760 778 923 772M1197 754Q1360 733 1516 707" />
      </g>
      ${hole(holeL, "hl")} ${hole(holeR, "hr")}

      <path d="M1069 316 1035 318 1017 321 1040 321 1069 318Z" fill="url(#redA)" />
      <path d="M1073 327 1070 345 1072 356 1075 345Z" fill="#1e6a2a" />
      <path d="M1073 321 1077 321 1081 359 1076 342Z" fill="#0f57f2" />
      <g font-family="Liberation Sans" font-size="14">
        <text x="1017" y="337" fill="#c43333">XC</text>
        <text x="1061" y="372" fill="#1650e6">ZC</text>
        <text x="1077" y="368" fill="#2d8f3a">YC</text>
      </g>

      <g fill="none" stroke="#969696" stroke-width="1">
        <path d="M448 878 490 875 495 906 494 935 452 938 452 909 495 906M448 878 452 909M448 878 450 892 452 938" />
      </g>
      <path d="M450 904 418 907 418 905 398 911 418 916 418 913 450 911Z" fill="url(#redA)" />
      <path d="M466 937H472V948L474 948 469 956 464 948 466 948Z" fill="#1d5e27" />
      <path d="M470 921 475 920 478 944 482 944 478 962 472 945 474 945Z" fill="#0f57f2" />
      <g font-family="Liberation Sans" font-size="13">
        <text x="385" y="916" fill="#c43333">X</text>
        <text x="465" y="967" fill="#2d8f3a">Y</text>
        <text x="476" y="972" fill="#1650e6" font-size="14">Z</text>
      </g>

      <text x="1717" y="1003" font-family="Liberation Sans" font-weight="700" font-size="49" fill="#808285">3D</text>
      <text x="1784" y="1001" font-family="Noto Sans CJK SC" font-weight="700" font-size="37" fill="#808285">世界网</text>
      <text x="1719" y="1022" font-family="Liberation Sans" font-size="14" letter-spacing="5.1" fill="#6f7175">WWW.3DSJW.COM</text>
    </svg>`;
  }

  render() {
    return html`
      <svg width="0" height="0">
        <defs>
          <linearGradient id="gt" x1="0" x2="0" y1="0" y2="1"><stop offset="0" stop-color="#e8e8e8" /><stop offset="1" stop-color="#c9c9c9" /></linearGradient>
          <linearGradient id="gl" x1="0" x2="0" y1="0" y2="1"><stop offset="0" stop-color="#fafafa" /><stop offset="1" stop-color="#c4c4c4" /></linearGradient>
          <linearGradient id="gr" x1="0" x2="0" y1="0" y2="1"><stop offset="0" stop-color="#bdbdbd" /><stop offset="1" stop-color="#8a8a8a" /></linearGradient>
          <linearGradient id="go" x1="0" x2="1" y1="0" y2="1"><stop offset="0" stop-color="#fbb65a" /><stop offset="1" stop-color="#ec7a0e" /></linearGradient>
        </defs>
      </svg>
      <div class="chrome">${this.titlebar()} ${this.menubar()}</div>
      <div class="ribbon">
        ${groups.map((g) => this.group(g))}
        <div class="group rest"><div class="gbody"></div><div class="gfoot"><span class="drop"></span></div></div>
      </div>
      <div class="main">
        <div class="rail">
          <div class="r-gear">${box(26, railIcons.gear)}</div>
          <div class="r-part">${box(26, railIcons.part, 30, 30)}</div>
          <div class="r-on">${box(28, railIcons.model, 30, 30)}</div>
          <div class="r-web">${box(26, railIcons.web, 30, 30)}</div>
          <div class="r-clock">${box(26, railIcons.clock)}</div>
          <div class="r-tools">${box(26, railIcons.tools, 27, 27)}</div>
        </div>
        <div class="nav">
          <div class="navhead"><span>部件导航器</span><span class="maxbtn"></span></div>
          ${this.tree()}
          <div class="splitter"></div>
          <div class="section"><i></i>相关性</div>
          <div class="section"><i></i>细节</div>
          <div class="section"><i></i>预览</div>
        </div>
        <div class="work">
          <div class="tabs">
            <div class="tab home">
              ${box(17, svg`<path d="M1 9 8.5 1.5 16 9M4 7V16H7V10H10V16H13V7M12 2V5" fill="none" stroke="#333" stroke-width="1.2" />`)}欢迎页面
            </div>
            <div class="tab on">
              ${box(18, svg`<g transform="translate(-1 -1) scale(.62)">${railIcons.model}</g>`)}22.prt
              <span class="close">${box(10, svg`<path d="M1 1 9 9M9 1 1 9" stroke="#fff" stroke-width="2" />`)}</span>
            </div>
          </div>
          ${this.part()}
        </div>
      </div>
      <div class="status"></div>
      <div class="taskbar"><span class="taskbtn"></span><span class="clock">23:14</span></div>
      <svg class="mark" width="84" height="96" viewBox="1630 945 84 96">
        <path d="M1673 953 1708 975V1013L1673 1035 1637 1013V975Z" fill="rgb(38 177 255 / .6)" />
        <path d="M1637 975 1673 953 1692 965C1693 975 1692 982 1690 985L1673 974 1657 984C1650 986 1640 995 1637 1005Z" fill="rgb(170 205 225 / .6)" />
        <path d="M1637 1005C1640 995 1650 990 1657 985V1007L1673 1017C1665 1025 1655 1027 1650 1021L1637 1013Z" fill="rgb(150 200 230 / .22)" />
        <path d="M1673 972 1693 984V1007L1673 1020 1653 1007V984Z" fill="none" stroke="#232428" stroke-width="3.5" />
        <path d="M1673 976 1689 985 1673 994 1657 985Z" fill="#4f86a3" />
        <path d="M1657 985 1673 994V1016L1657 1007Z" fill="#437c9a" />
        <path d="M1689 985 1673 994V1016L1689 1007Z" fill="#14648d" />
      </svg>
    `;
  }
}
